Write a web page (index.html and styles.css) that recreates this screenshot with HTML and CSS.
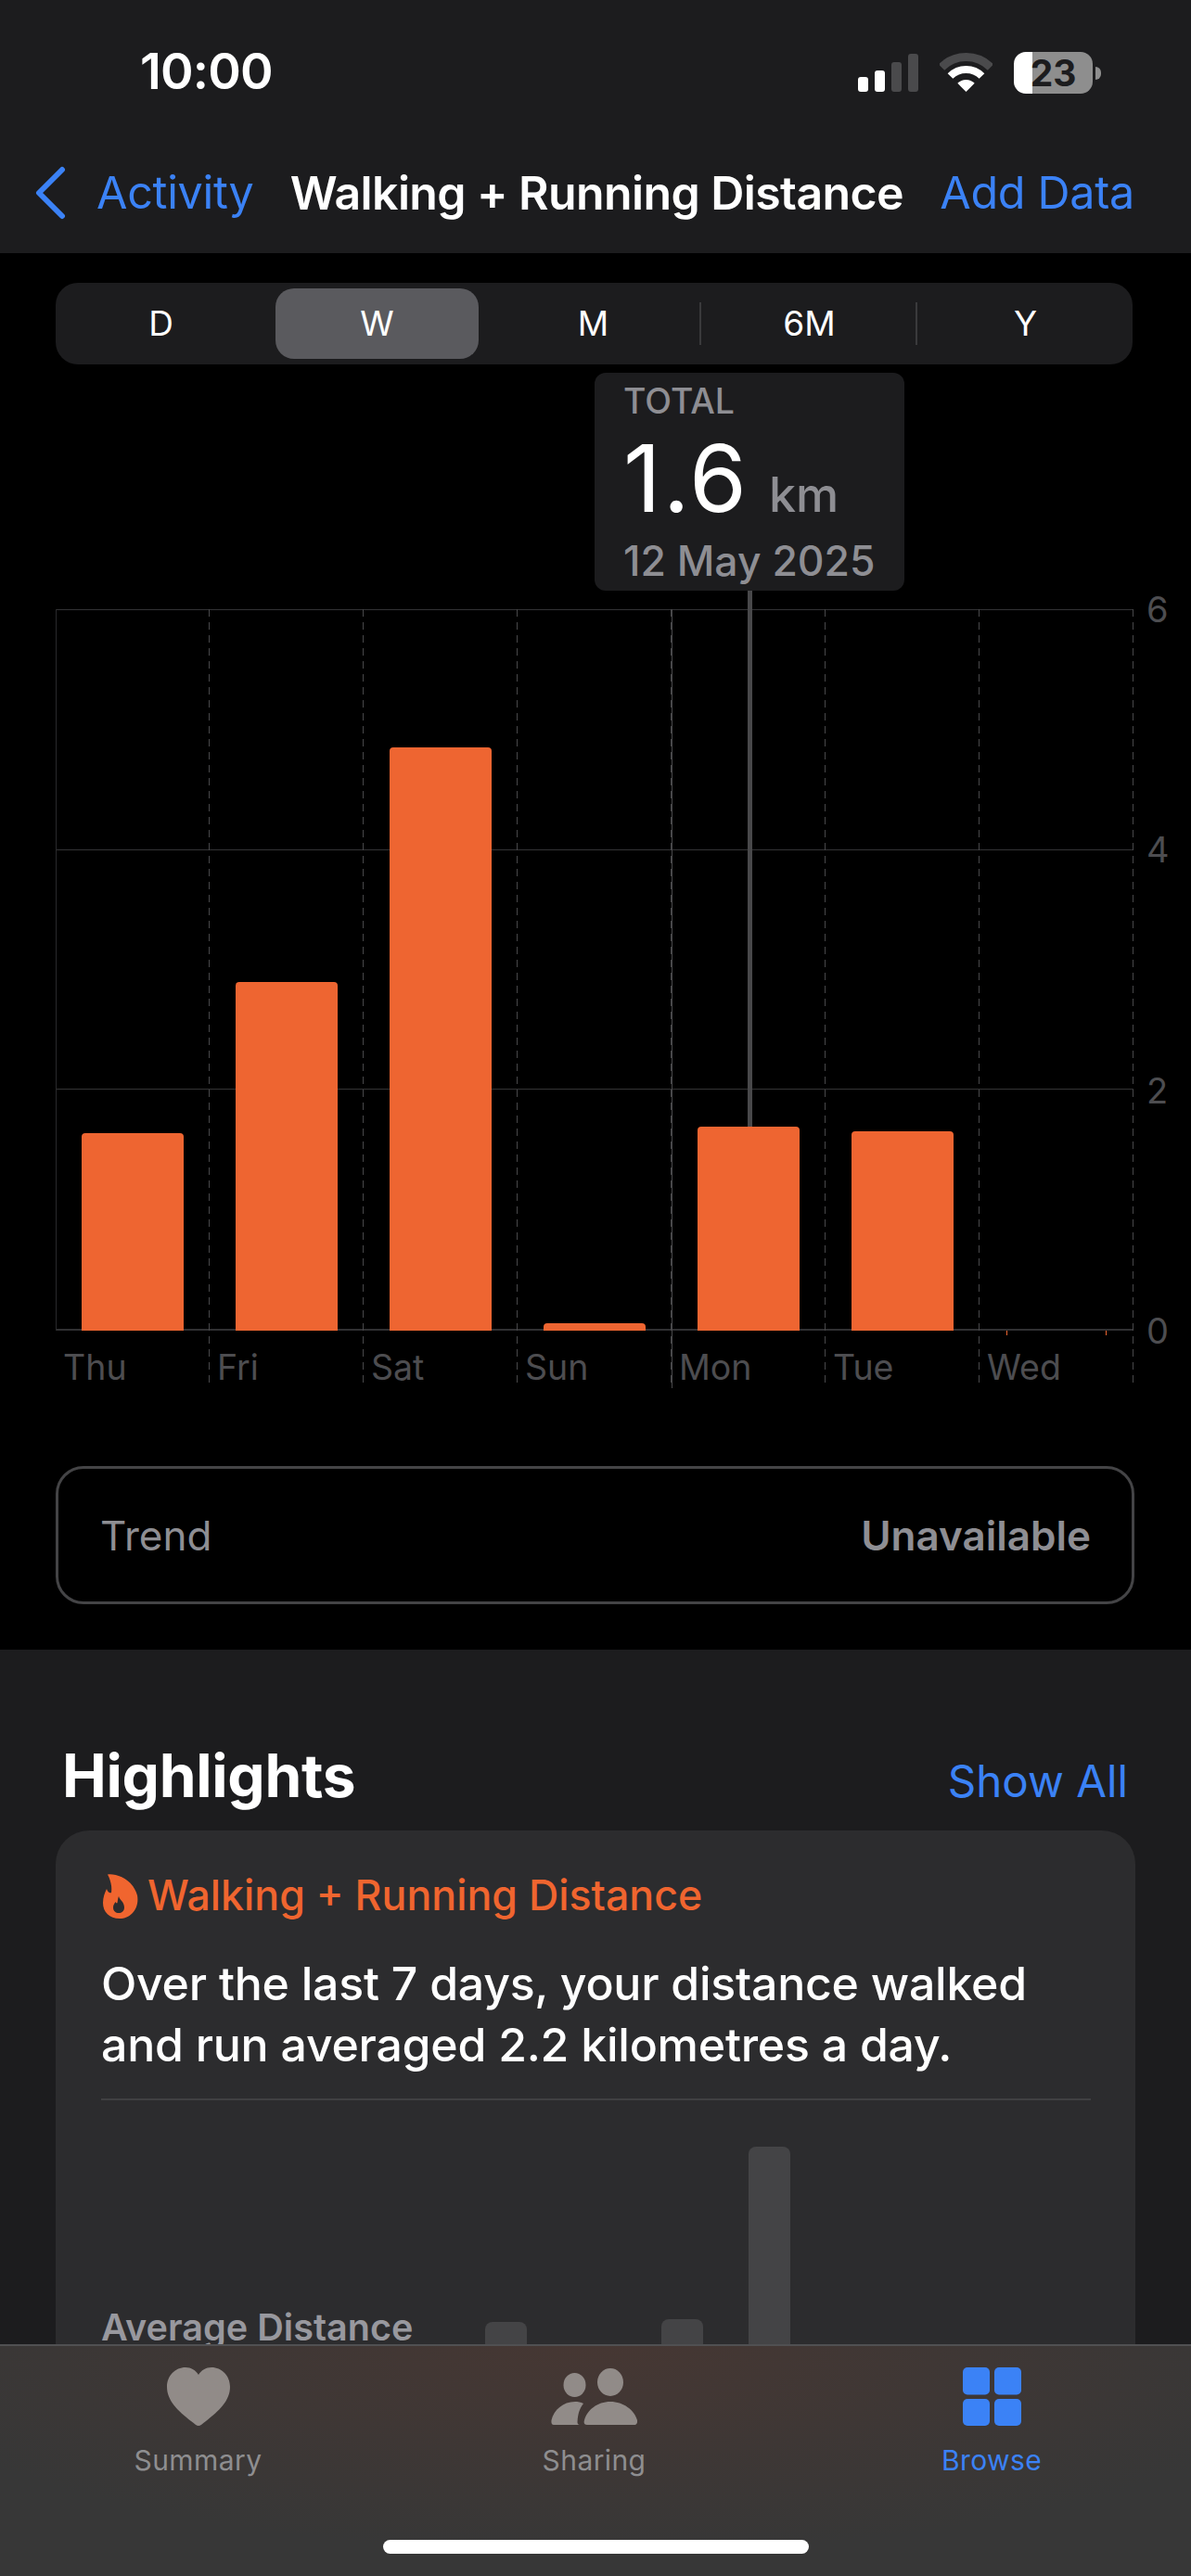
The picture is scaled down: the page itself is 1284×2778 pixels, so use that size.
FILE: index.html
```html
<!DOCTYPE html>
<html lang="en">
<head>
<meta charset="utf-8">
<title>Walking + Running Distance</title>
<link rel="stylesheet" href="styles.css">
</head>
<body>
<div class="screen">
  <header class="topbar">
    <div class="status">
      <span class="time">10:00</span>
      <div class="status-icons">
        <div class="signal"><i class="on s1"></i><i class="on s2"></i><i class="s3"></i><i class="s4"></i></div>
        <svg class="wifi" viewBox="0 0 57 42" width="57" height="42"><path d="M2 15.5A37.5 37.5 0 0 1 55 15.5" fill="none" stroke="#4a4a4c" stroke-width="9"/><path d="M11.5 25A24 24 0 0 1 45.5 25" fill="none" stroke="#fff" stroke-width="8"/><path d="M28.5 42L19.3 32.8A13 13 0 0 1 37.7 32.8Z" fill="#fff"/></svg>
        <div class="battery"><span>23</span></div>
        <div class="battery-nub"></div>
      </div>
    </div>
    <nav class="navbar">
      <div class="back">
        <svg class="chevron" viewBox="0 0 34 58" width="34" height="58"><path d="M30 4L5 29L30 54" fill="none" stroke="#3b82f6" stroke-width="6" stroke-linecap="round" stroke-linejoin="round"/></svg>
        <span class="link">Activity</span>
      </div>
      <span class="nav-title">Walking + Running Distance</span>
      <span class="link">Add Data</span>
    </nav>
  </header>

  <main class="detail">
    <div class="segments">
      <span class="seg first">D</span>
      <span class="seg selected">W</span>
      <span class="seg">M</span>
      <span class="seg divided">6M</span>
      <span class="seg divided">Y</span>
    </div>

    <div class="chart">
      <div class="plot">
        <div class="hlines"><i></i><i></i><i></i></div>
        <div class="day axis"><div class="slot"><div class="bar" style="height:213px"></div></div><span class="day-label">Thu</span></div>
        <div class="day"><div class="slot"><div class="bar" style="height:376px"></div></div><span class="day-label">Fri</span></div>
        <div class="day"><div class="slot"><div class="bar" style="height:629px"></div></div><span class="day-label">Sat</span></div>
        <div class="day"><div class="slot"><div class="bar" style="height:8px"></div></div><span class="day-label">Sun</span></div>
        <div class="day week"><div class="slot"><div class="bar" style="height:220px"></div></div><span class="day-label">Mon</span></div>
        <div class="day"><div class="slot"><div class="bar" style="height:215px"></div></div><span class="day-label">Tue</span></div>
        <div class="day last"><div class="slot"><div class="trace"></div></div><span class="day-label">Wed</span></div>
        <div class="callout">
          <div class="callout-kicker">TOTAL</div>
          <div class="callout-value">1.6<small>km</small></div>
          <div class="callout-date">12 May 2025</div>
        </div>
        <div class="callout-line"></div>
      </div>
      <div class="yaxis"><span>6</span><span>4</span><span>2</span><span>0</span></div>
    </div>

    <div class="trend">
      <span>Trend</span>
      <strong>Unavailable</strong>
    </div>
  </main>

  <section class="highlights">
    <div class="section-head">
      <h2>Highlights</h2>
      <span class="show-all">Show All</span>
    </div>
    <article class="card">
      <div class="card-title">
        <svg class="flame" viewBox="0 0 38 49" width="38" height="49"><path fill="#f0652f" fill-rule="evenodd" d="M5 1.5C14 0 32 6 37 24C39.500 38 30 49 18 49C7 49 0 42 0 32C0 26 2 21 4 17C5 20 7 22 9 21C10 14 8 7 5 1.500ZM17 25C18 29 23 31 23 37C23 41 20 43 17 43C14 43 11 41 11 37C11 34 12.500 33 13.500 31C14 32 15 33 15.500 32C16 30 16 27 17 25Z"/></svg>
        <span>Walking + Running Distance</span>
      </div>
      <p class="card-text">Over the last 7 days, your distance walked and run averaged 2.2 kilometres a day.</p>
      <hr class="card-rule">
      <div class="mini">
        <span class="mini-label">Average Distance</span>
        <div class="mini-bars">
          <i class="m1"></i><i class="m2"></i><i class="m3"></i>
        </div>
      </div>
    </article>
  </section>

  <footer class="tabbar">
    <div class="tabs">
      <div class="tab">
        <svg viewBox="0 0 68 63" width="68" height="63"><path fill="#918b88" d="M34 63C32 63 30 61 26 58C12 47 0 36 0 21C0 9 9 0 20 0C26 0 31 3 34 8C37 3 42 0 48 0C59 0 68 9 68 21C68 36 56 47 42 58C38 61 36 63 34 63Z"/></svg>
        <span>Summary</span>
      </div>
      <div class="tab">
        <svg viewBox="0 0 93 61" width="93" height="63"><g fill="#918b88"><ellipse cx="25.500" cy="18" rx="12" ry="13"/><ellipse cx="64" cy="15" rx="14" ry="15"/><path d="M39 61C36 61 35 59 36 56C39 45 50 36 64 36C78 36 90 45 93 56C93.500 59 92 61 90 61Z"/><path d="M3 61C1 61 0 59 .5 56C3 45 13 36 26 36C29 36 32 36.500 35 38C31 43 29 49 28.500 58C28.500 60 29.500 61 31 61Z"/></g></svg>
        <span>Sharing</span>
      </div>
      <div class="tab active">
        <svg viewBox="0 0 63 63" width="63" height="63"><g fill="#3b82f6"><rect width="29" height="29.500" rx="5"/><rect x="34" width="29" height="29.500" rx="5"/><rect y="34" width="29" height="29" rx="5"/><rect x="34" y="34" width="29" height="29" rx="5"/></g></svg>
        <span>Browse</span>
      </div>
    </div>
    <div class="home-indicator"></div>
  </footer>
</div>
</body>
</html>
```
FILE: styles.css
```css
* { box-sizing: border-box; }
html, body { margin: 0; padding: 0; background: #000; }
body { font-family: Inter, "Liberation Sans", sans-serif; color: #fff; }
.screen { position: relative; width: 1284px; height: 2778px; overflow: hidden; }

/* top bar */
.topbar { height: 273px; padding-top: 49px; background: #1c1c1e; }
.status { display: flex; justify-content: space-between; align-items: center; height: 54px; padding-left: 151px; }
.time { font-size: 54px; font-weight: 600; letter-spacing: -.8px; line-height: 54px; padding-top: 2px; }
.status-icons { display: flex; align-items: flex-end; padding-right: 97px; height: 45px; }
.signal { display: flex; align-items: flex-end; gap: 7px; margin-right: 23px; height: 42px; }
.signal i { display: block; width: 11px; border-radius: 3px; background: #4a4a4c; }
.signal .on { background: #fff; }
.s1 { height: 16px; }
.s2 { height: 23px; }
.s3 { height: 32px; }
.s4 { height: 41px; }
.wifi { margin-right: 23px; }
.battery { width: 85px; height: 45px; margin-bottom: -2px; border-radius: 13px; display: flex; align-items: center; justify-content: center; background: linear-gradient(90deg, #fff 0 24%, #8e8e8e 24% 100%); }
.battery span { color: #1c1c1e; font-size: 39px; font-weight: 700; line-height: 45px; }
.battery-nub { width: 6px; height: 14px; margin: 0 0 13px 3px; background: #8e8e8e; border-radius: 0 7px 7px 0; }

.navbar { display: flex; align-items: center; justify-content: space-between; height: 60px; margin-top: 75px; padding: 0 61px 0 37px; }
.back { display: flex; align-items: center; gap: 33px; }
.link { color: #3b82f6; font-size: 48.5px; font-weight: 400; line-height: 60px; letter-spacing: -.3px; }
.nav-title { font-size: 50px; font-weight: 600; line-height: 60px; letter-spacing: -.6px; }

/* detail */
.detail { height: 1506px; padding-top: 32px; background: #000; }
.segments { display: grid; grid-template-columns: 230px repeat(4, 233px); margin-left: 60px; width: 1161px; height: 88px; border-radius: 24px; background: #1c1c1e; padding: 6px 0; }
.seg { display: flex; align-items: center; justify-content: center; font-size: 37px; line-height: 76px; position: relative; }
.seg.first { padding-right: 3px; }
.seg.selected { background: #5a5a5e; border-radius: 20px; width: 219px; margin-left: 7px; }
.seg.divided::before { content: ""; position: absolute; left: -2px; top: 15px; height: 46px; width: 2px; background: #3a3a3c; }

.chart { display: flex; margin: 264px 0 0 60px; }
.plot { position: relative; display: grid; grid-template-columns: repeat(7, 166px); width: 1162px; height: 840px; }
.hlines { position: absolute; left: 0; top: 0; width: 1162px; height: 778px; border-bottom: 2px solid #303032; display: grid; grid-template-rows: repeat(3, 1fr); }
.hlines i { border-top: 1px solid #333335; }
.day { position: relative; display: flex; flex-direction: column; background: repeating-linear-gradient(180deg, #48484a 0 8px, transparent 8px 14px) right top / 1px 100% no-repeat; }
.day.axis { background: repeating-linear-gradient(180deg, #48484a 0 8px, transparent 8px 14px) right top / 1px 100% no-repeat, linear-gradient(#2a2a2c, #2a2a2c) left top / 1px 778px no-repeat; }
.day.week::before { content: ""; position: absolute; left: 0; top: 0; bottom: 0; width: 1px; background: #48484a; }
.slot { height: 778px; flex: none; display: flex; align-items: flex-end; justify-content: center; position: relative; }
.bar { width: 110px; background: #ee6531; border-radius: 4px 4px 0 0; }
.trace { width: 108px; height: 5px; margin-bottom: -5px; border: solid #ee6531; border-width: 0 1px; }
.day-label { font-size: 37.5px; line-height: 44px; color: #4d4d50; margin: 18px 0 0 8px; }
.yaxis { display: flex; flex-direction: column; justify-content: space-between; height: 818px; margin: -20px 0 0 14px; color: #4d4d50; font-size: 38px; line-height: 40px; }

.callout { position: absolute; left: 581px; top: -255px; width: 334px; height: 235px; background: #1c1c1e; border-radius: 12px; padding: 9px 31px; white-space: nowrap; }
.callout-kicker { font-size: 37.5px; line-height: 44px; font-weight: 500; color: #8e8e93; }
.callout-value { font-size: 100px; line-height: 112px; font-weight: 400; margin-top: 5px; letter-spacing: 2px; }
.callout-value small { font-size: 52px; font-weight: 500; color: #8e8e93; margin-left: 22px; letter-spacing: 0; }
.callout-date { font-size: 44.5px; line-height: 54px; font-weight: 500; color: #8e8e93; margin-top: -12px; }
.callout-line { position: absolute; left: 746px; top: -20px; width: 5px; height: 578px; background: #48484a; }

.trend { display: flex; justify-content: space-between; align-items: center; margin: 84px 61px 0 60px; height: 149px; border: 3px solid #444446; border-radius: 30px; padding: 0 44px 0 45px; color: #8e8e93; font-size: 44px; }
.trend strong { font-weight: 600; }

/* highlights */
.highlights { background: #1c1c1e; height: 1000px; padding: 0 60px; }
.section-head { display: flex; justify-content: space-between; align-items: baseline; height: 195px; padding: 100px 8px 0 7px; }
.section-head h2 { margin: 0; font-size: 64px; font-weight: 700; line-height: 72px; letter-spacing: -.3px; }
.show-all { color: #3b82f6; font-size: 47.5px; }
.card { background: #2c2c2e; border-radius: 36px; height: 800px; padding: 45px 48px 0 49px; }
.card-title { display: flex; align-items: center; gap: 10px; color: #f0652f; font-size: 44.7px; font-weight: 500; height: 50px; margin-left: 2px; }
.card-text { margin: 37px 0 0 0; font-size: 50px; line-height: 66px; font-weight: 500; width: 1080px; letter-spacing: -.25px; }
.card-rule { border: 0; height: 2px; background: #404042; margin: 25px 0 0; }
.mini { position: relative; height: 300px; }
.mini-label { position: absolute; left: 0; top: 222px; font-size: 39.6px; line-height: 46px; font-weight: 600; color: #98989e; }
.mini-bars i { position: absolute; display: block; width: 45px; background: #444446; border-radius: 8px 8px 0 0; bottom: 0; }
.mini-bars .m1 { left: 414px; top: 239px; }
.mini-bars .m2 { left: 604px; top: 236px; }
.mini-bars .m3 { left: 698px; top: 50px; }

/* tabs */
.tabbar { position: absolute; left: 0; right: 0; bottom: 0; height: 250px; border-top: 2px solid #505052; background: radial-gradient(ellipse 62% 90% at 50% 0, #463733 0, rgba(70, 55, 51, 0) 100%), #373737; }
.tabs { display: grid; grid-template-columns: 427px 427px 430px; padding-top: 23px; }
.tab { display: flex; flex-direction: column; align-items: center; color: #8e8e90; font-size: 30px; font-weight: 400; line-height: 36px; gap: 19px; letter-spacing: .4px; }
.tab.active { color: #3b82f6; }
.home-indicator { position: absolute; left: 413px; top: 209px; width: 459px; height: 15px; border-radius: 8px; background: #fff; }
```
